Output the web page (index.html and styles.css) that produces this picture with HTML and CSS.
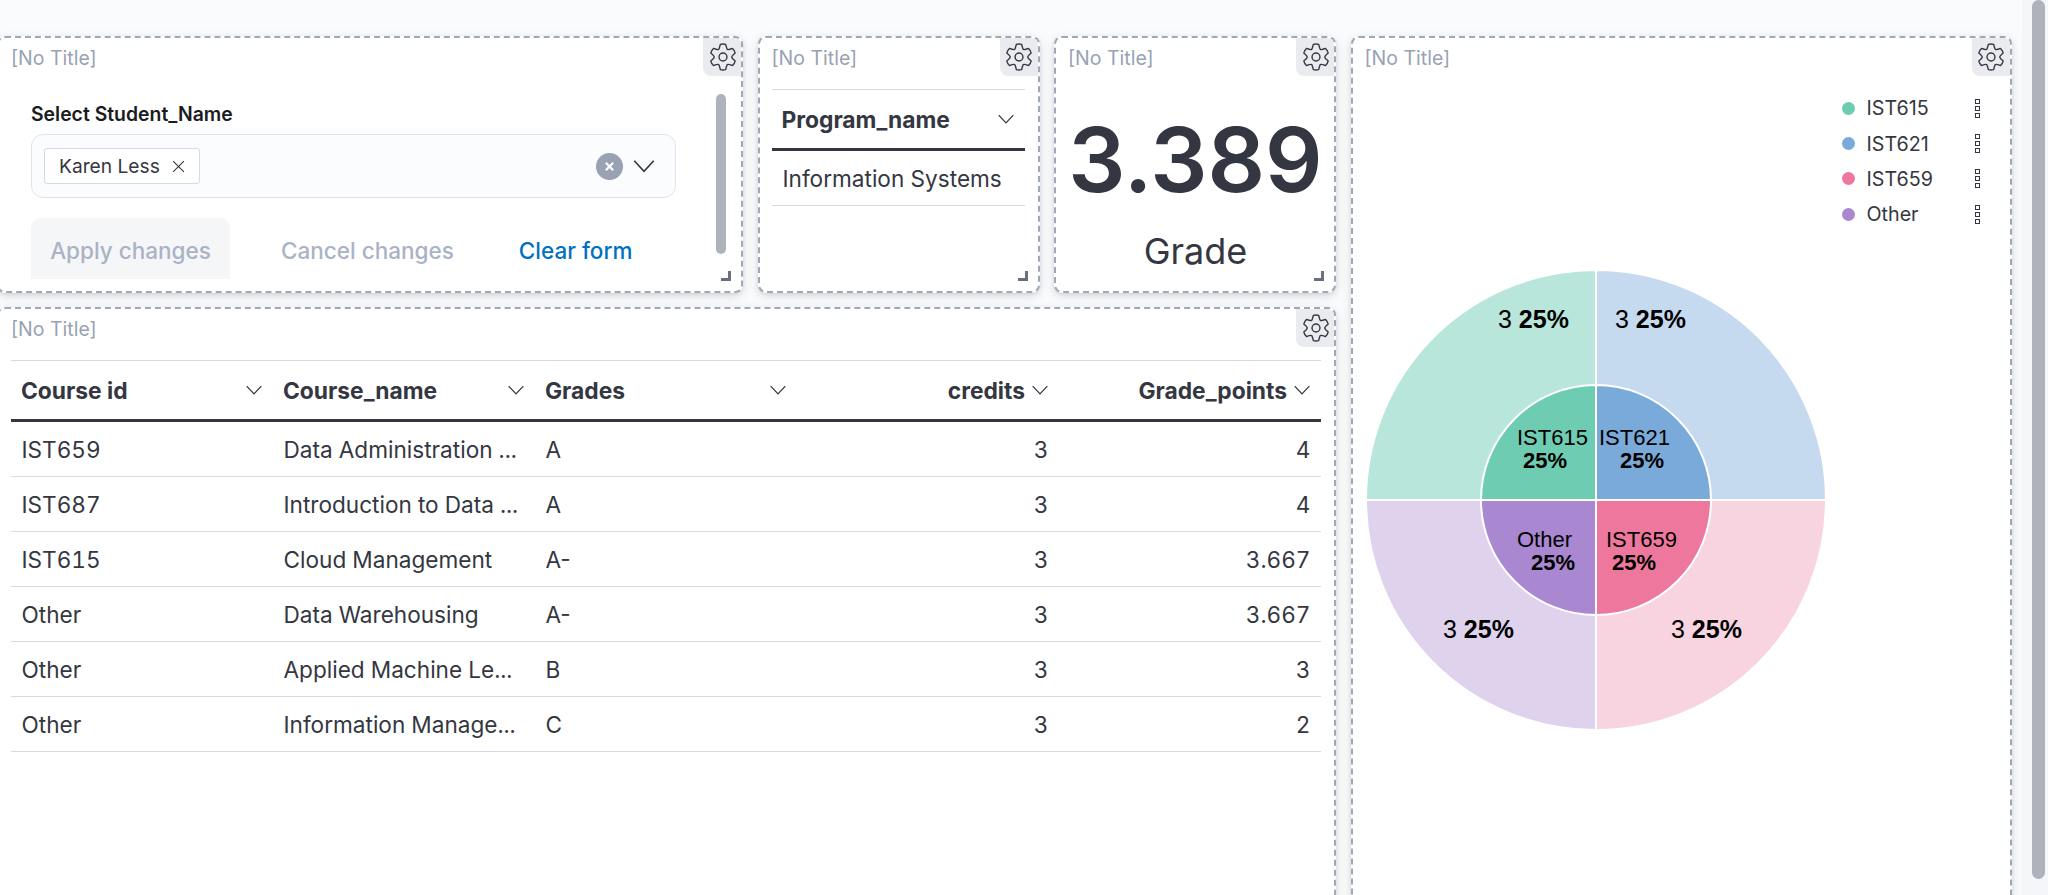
FILE: index.html
```html
<!DOCTYPE html>
<html lang="en">
<head>
<meta charset="utf-8">
<title>Dashboard</title>
<link rel="stylesheet" href="styles.css">
</head>
<body>
<svg class="defs" width="0" height="0" aria-hidden="true">
  <symbol id="gear" viewBox="0 0 24 24">
    <path d="M9.71 1.24Q12 .5 14.29 1.24Q15.2 5 15.75 5.5Q16.5 6 20.17 4.64Q21.96 6.25 22.46 8.6Q19.5 11 19.5 12Q19.5 13 22.46 15.4Q21.96 17.75 20.17 19.36Q16.5 18 15.75 18.5Q15.2 19 14.29 22.76Q12 23.5 9.71 22.76Q8.8 19 8.25 18.5Q7.5 18 3.83 19.36Q2.04 17.75 1.54 15.4Q4.5 13 4.5 12Q4.5 11 1.54 8.6Q2.04 6.25 3.83 4.64Q7.5 6 8.25 5.5Q8.8 5 9.71 1.24Z" fill="none" stroke="currentColor" stroke-width="1.2" stroke-linejoin="round"/>
    <circle cx="12" cy="12" r="3.4" fill="none" stroke="currentColor" stroke-width="1.2"/>
  </symbol>
  <symbol id="chev" viewBox="0 0 16 16">
    <path d="M1.5 4.5 8 11.5l6.5-7" fill="none" stroke="currentColor" stroke-width="1.1"/>
  </symbol>
</svg>
<main class="dash">
  <section class="panel p-form">
    <header class="ptitle">[No Title]</header>
    <div class="gearbox"><svg class="gear"><use href="#gear"/></svg></div>
    <div class="formbody">
      <label class="flabel">Select Student_Name</label>
      <div class="combo">
        <span class="pill">Karen Less<svg class="pillx" viewBox="0 0 12 12"><path d="M1 1l10 10M11 1 1 11" stroke="currentColor" stroke-width="1" fill="none"/></svg></span>
        <span class="clear"><svg viewBox="0 0 12 12"><path d="M2 2l8 8M10 2 2 10" stroke="#fff" stroke-width="2.4" fill="none"/></svg></span>
        <svg class="combochev"><use href="#chev"/></svg>
      </div>
      <div class="actions">
        <span class="btn apply">Apply changes</span>
        <span class="btn cancel">Cancel changes</span>
        <span class="btn clearform">Clear form</span>
      </div>
    </div>
    <div class="pscroll"></div>
    <span class="resize"></span>
  </section>

  <section class="panel p-prog">
    <header class="ptitle">[No Title]</header>
    <div class="gearbox"><svg class="gear"><use href="#gear"/></svg></div>
    <div class="ptable">
      <div class="th prog-h"><span>Program_name</span><svg class="chev"><use href="#chev"/></svg></div>
      <div class="prog-c">Information Systems</div>
    </div>
    <span class="resize"></span>
  </section>

  <section class="panel p-metric">
    <header class="ptitle">[No Title]</header>
    <div class="gearbox"><svg class="gear"><use href="#gear"/></svg></div>
    <div class="metric">
      <div class="mval">3.389</div>
      <div class="mlabel">Grade</div>
    </div>
    <span class="resize"></span>
  </section>

  <section class="panel p-pie">
    <header class="ptitle">[No Title]</header>
    <div class="gearbox"><svg class="gear"><use href="#gear"/></svg></div>
    <ul class="legend">
      <li><i class="dot c1"></i><span>IST615</span><b class="more"><i></i><i></i><i></i></b></li>
      <li><i class="dot c2"></i><span>IST621</span><b class="more"><i></i><i></i><i></i></b></li>
      <li><i class="dot c3"></i><span>IST659</span><b class="more"><i></i><i></i><i></i></b></li>
      <li><i class="dot c4"></i><span>Other</span><b class="more"><i></i><i></i><i></i></b></li>
    </ul>
    <svg class="pie" viewBox="0 0 480 480" width="480" height="480">
      <g stroke="#fff" stroke-width="2">
        <path d="M240 240V10A230 230 0 0 1 470 240Z" fill="#c6daef"/>
        <path d="M240 240H470A230 230 0 0 1 240 470Z" fill="#f8d3e0"/>
        <path d="M240 240V470A230 230 0 0 1 10 240Z" fill="#dfd2ed"/>
        <path d="M240 240H10A230 230 0 0 1 240 10Z" fill="#b8e6da"/>
        <path d="M240 240V125A115 115 0 0 1 355 240Z" fill="#79aad9"/>
        <path d="M240 240H355A115 115 0 0 1 240 355Z" fill="#ee789d"/>
        <path d="M240 240V355A115 115 0 0 1 125 240Z" fill="#a987d1"/>
        <path d="M240 240H125A115 115 0 0 1 240 125Z" fill="#6dccb1"/>
      </g>
      <g class="pl">
        <text class="plo" x="142" y="68">3 <tspan class="plb">25%</tspan></text>
        <text class="plo" x="259" y="68">3 <tspan class="plb">25%</tspan></text>
        <text class="plo" x="87" y="378">3 <tspan class="plb">25%</tspan></text>
        <text class="plo" x="315" y="378">3 <tspan class="plb">25%</tspan></text>
        <text x="161" y="185">IST615</text><text class="plb" x="167" y="208">25%</text>
        <text x="243" y="185">IST621</text><text class="plb" x="264" y="208">25%</text>
        <text x="161" y="287">Other</text><text class="plb" x="175" y="310">25%</text>
        <text x="250" y="287">IST659</text><text class="plb" x="256" y="310">25%</text>
      </g>
    </svg>
  </section>

  <section class="panel p-table">
    <header class="ptitle">[No Title]</header>
    <div class="gearbox"><svg class="gear"><use href="#gear"/></svg></div>
    <div class="grid-table">
      <div class="th"><span>Course id</span><svg class="chev"><use href="#chev"/></svg></div>
      <div class="th"><span>Course_name</span><svg class="chev"><use href="#chev"/></svg></div>
      <div class="th"><span>Grades</span><svg class="chev"><use href="#chev"/></svg></div>
      <div class="th num"><span>credits</span><svg class="chev"><use href="#chev"/></svg></div>
      <div class="th num"><span>Grade_points</span><svg class="chev"><use href="#chev"/></svg></div>

      <div class="td">IST659</div><div class="td">Data Administration ...</div><div class="td plain">A</div><div class="td num">3</div><div class="td num">4</div>
      <div class="td">IST687</div><div class="td">Introduction to Data ...</div><div class="td plain">A</div><div class="td num">3</div><div class="td num">4</div>
      <div class="td">IST615</div><div class="td">Cloud Management</div><div class="td plain">A-</div><div class="td num">3</div><div class="td num">3.667</div>
      <div class="td">Other</div><div class="td">Data Warehousing</div><div class="td plain">A-</div><div class="td num">3</div><div class="td num">3.667</div>
      <div class="td">Other</div><div class="td">Applied Machine Le...</div><div class="td plain">B</div><div class="td num">3</div><div class="td num">3</div>
      <div class="td">Other</div><div class="td">Information Manage...</div><div class="td plain">C</div><div class="td num">3</div><div class="td num">2</div>
    </div>
  </section>
</main>
<div class="vscroll"><div class="vthumb"></div></div>
</body>
</html>
```
FILE: styles.css
```css
* { box-sizing: border-box; }
html, body { margin: 0; height: 895px; overflow: hidden; }
body { background: #fafbfd; font-family: Inter, "Liberation Sans", sans-serif; color: #343741; position: relative; }
.defs { position: absolute; }

.dash {
  display: grid;
  grid-template-columns: 746px 282px 282px 661px;
  grid-template-rows: 257px 700px;
  column-gap: 14.5px;
  row-gap: 14px;
  margin-left: -3px;
  padding-top: 36px;
  width: 2027px;
}
.panel {
  position: relative;
  background: #fff;
  border: 2px dashed #a0a8b8;
  border-radius: 8px;
  box-shadow: 0 3px 10px rgba(52, 55, 65, .17), 0 1px 3px rgba(52, 55, 65, .1);
}
.p-pie { grid-column: 4; grid-row: 1 / span 2; }
.p-table { grid-column: 1 / span 3; grid-row: 2; }

.ptitle { position: absolute; left: 12px; top: 8px; font-size: 19.5px; line-height: 24px; color: #98a2b3; }
.gearbox {
  position: absolute; right: 0; top: 0; width: 38px; height: 38px;
  background: #e9ebee; border-radius: 0 6px 0 8px;
  display: flex; align-items: center; justify-content: center; color: #343741;
}
.gear { width: 28px; height: 28px; flex: none; margin-right: -1px; }
.resize { position: absolute; right: 10px; bottom: 10px; width: 10px; height: 10px; border-right: 3px solid #69707d; border-bottom: 3px solid #69707d; }

/* form panel */
.formbody { height: 100%; overflow: hidden; padding: 63px 0 0 32px; display: flex; flex-direction: column; }
.flabel { font-size: 19.4px; font-weight: 600; line-height: 26px; color: #1a1c21; }
.combo {
  margin-top: 7px; width: 645px; height: 64px; flex: none;
  background: #fbfcfd; border: 1.5px solid #dfe3ec; border-radius: 12px;
  display: flex; align-items: center; padding: 0 19px 0 12px;
}
.pill {
  display: flex; align-items: center; height: 36px; padding: 0 14px;
  background: #fff; border: 1.5px solid #d3dae6; border-radius: 3px; font-size: 19.2px; color: #343741;
}
.pillx { width: 13px; height: 13px; margin-left: 12px; }
.clear { margin-left: auto; width: 27px; height: 27px; border-radius: 50%; background: #98a2b3; display: flex; align-items: center; justify-content: center; }
.clear svg { width: 11px; height: 11px; }
.combochev { width: 24px; height: 24px; margin-left: 9px; color: #343741; }
.actions { margin-top: 20px; display: flex; align-items: flex-start; flex: none; height: 61px; overflow: hidden; }
.btn { font-size: 22.5px; font-weight: 500; line-height: 26px; }
.apply { width: 199px; height: 70px; background: #f5f6f8; border-radius: 10px; color: #a9b3c5; padding-top: 20px; text-align: center; }
.cancel { margin-left: 51px; padding-top: 20px; color: #a9b3c5; }
.clearform { margin-left: 65px; padding-top: 20px; color: #0071c2; }
.pscroll { position: absolute; left: 717px; top: 56px; width: 10px; height: 160px; border-radius: 5px; background: #aeb3bb; }

/* program panel */
.ptable { position: absolute; left: 12px; right: 13px; top: 51px; }
.th { display: flex; align-items: center; justify-content: space-between; padding: 0 10px; font-size: 22.8px; font-weight: 700; color: #343741; }
.th .chev { width: 18px; height: 18px; flex: none; }
.prog-h { height: 62px; border-top: 1.5px solid #d3dae6; border-bottom: 3px solid #343741; }
.prog-c { height: 55px; padding: 0 11px; display: flex; align-items: center; font-size: 22.6px; border-bottom: 1.5px solid #d3dae6; }

/* metric panel */
.metric { display: flex; flex-direction: column; align-items: center; height: 100%; padding: 62px 0 0 1px; }
.mval { font-size: 90px; font-weight: 600; line-height: 120px; color: #343741; }
.mlabel { font-size: 36px; line-height: 44px; margin-top: 9px; }

/* pie panel */
.legend { list-style: none; margin: 0; padding: 0; position: absolute; left: 489px; top: 52.5px; width: 138px; }
.legend li { display: flex; align-items: center; height: 35.4px; font-size: 19.7px; }
.dot { width: 13px; height: 13px; border-radius: 50%; margin-right: 12px; flex: none; }
.c1 { background: #6dccb1; } .c2 { background: #79aad9; } .c3 { background: #ee789d; } .c4 { background: #a987d1; }
.more { margin-left: auto; display: flex; flex-direction: column; gap: 2px; }
.more i { display: block; width: 5px; height: 5px; border: 1.2px solid #343741; }
.pie { position: absolute; left: 3px; top: 222px; }
.pl text { font-family: "Liberation Sans", Arial, sans-serif; font-size: 22px; fill: #000; stroke: none; }
.pl .plo { font-size: 25px; }
.pl .plb { font-weight: 700; }

/* data table */
.grid-table {
  position: absolute; left: 12px; top: 51px; width: 1310px;
  display: grid; grid-template-columns: repeat(5, 262px); grid-template-rows: 62px; grid-auto-rows: 55px;
}
.grid-table .th { border-top: 1.5px solid #d3dae6; border-bottom: 3px solid #343741; }
.th.num { justify-content: flex-end; gap: 6px; }
.td { display: flex; align-items: center; padding: 0 10.5px; font-size: 22.6px; font-variant-numeric: tabular-nums; border-bottom: 1.5px solid #d3dae6; white-space: nowrap; overflow: hidden; }
.td.plain { font-variant-numeric: normal; }
.td.num { justify-content: flex-end; }

/* page scrollbar */
.vscroll { position: absolute; right: 0; top: 0; width: 26px; height: 895px; background: #f5f6f9; }
.vthumb { position: absolute; left: 10px; top: 0; width: 13px; height: 879px; border-radius: 7px; background: #aeb3bb; }
```
